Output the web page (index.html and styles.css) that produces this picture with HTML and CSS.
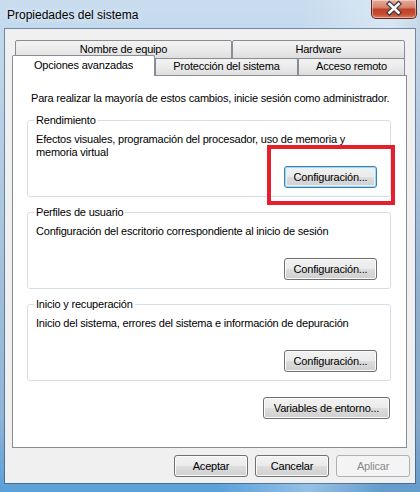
FILE: index.html
```html
<!DOCTYPE html>
<html>

<head>
  <title>Propiedades del sistema</title>
  <link rel="stylesheet" href="styles.css">
</head>

<body>
  <div class="window">
    <div class="titlebar">
      <span class="title">Propiedades del sistema</span>
      <div class="close">
        <svg width="46" height="19" viewBox="0 0 46 19">
          <path d="M18.5 5 L27.5 13.5 M27.5 5 L18.5 13.5" stroke="#3b3b3b" stroke-width="5" stroke-linecap="square" fill="none"/>
          <path d="M18.5 5 L27.5 13.5 M27.5 5 L18.5 13.5" stroke="#ffffff" stroke-width="2.6" stroke-linecap="square" fill="none"/>
        </svg>
      </div>
    </div>

    <div class="client">
      <div class="tabs-back">
        <div class="tab tab-name">Nombre de equipo</div>
        <div class="tab tab-hw">Hardware</div>
      </div>
      <div class="tabs-front">
        <div class="tab tab-selected">Opciones avanzadas</div>
        <div class="tab tab-prot">Protección del sistema</div>
        <div class="tab tab-remote">Acceso remoto</div>
      </div>

      <div class="panel">
        <div class="intro">Para realizar la mayoría de estos cambios, inicie sesión como administrador.</div>

        <fieldset class="group">
          <legend>Rendimiento</legend>
          <div class="group-body">
            <div class="group-text">Efectos visuales, programación del procesador, uso de memoria y<br>memoria virtual</div>
            <div class="group-actions">
              <button class="btn btn-default btn-config">Configuración...</button>
            </div>
          </div>
        </fieldset>

        <fieldset class="group">
          <legend>Perfiles de usuario</legend>
          <div class="group-body">
            <div class="group-text">Configuración del escritorio correspondiente al inicio de sesión</div>
            <div class="group-actions">
              <button class="btn btn-config">Configuración...</button>
            </div>
          </div>
        </fieldset>

        <fieldset class="group">
          <legend>Inicio y recuperación</legend>
          <div class="group-body">
            <div class="group-text">Inicio del sistema, errores del sistema e información de depuración</div>
            <div class="group-actions">
              <button class="btn btn-config">Configuración...</button>
            </div>
          </div>
        </fieldset>

        <div class="env-row">
          <button class="btn btn-env">Variables de entorno...</button>
        </div>
      </div>

      <div class="footer">
        <button class="btn btn-footer">Aceptar</button>
        <button class="btn btn-footer">Cancelar</button>
        <button class="btn btn-footer" disabled>Aplicar</button>
      </div>
    </div>

    <div class="highlight"></div>
  </div>
</body>

</html>
```

FILE: styles.css
```css
body {
  margin: 0;
  font-family: "Liberation Sans", Arial, sans-serif;
  font-size: 11px;
  letter-spacing: -0.2px;
  color: #000000;
}

.window {
  position: relative;
  width: 420px;
  height: 492px;
  overflow: hidden;
  background:
    linear-gradient(100deg, rgba(255, 255, 255, 0) 60%, rgba(255, 255, 255, 0.35) 78%, rgba(120, 150, 180, 0.35) 92%),
    linear-gradient(180deg, #c9ddef 0%, #c3d9ed 6%, #a7c3dd 50%, #8fb4d6 85%, #5a9fd8 100%);
}

.titlebar {
  height: 29px;
  display: flex;
  justify-content: space-between;
  align-items: flex-start;
}

.title {
  padding: 8px 0 0 7px;
  font-size: 12px;
  line-height: 15px;
  letter-spacing: 0;
  text-shadow: 0 0 6px rgba(255, 255, 255, 0.9);
}

.close {
  width: 46px;
  height: 19px;
  margin-right: 3px;
  box-sizing: border-box;
  border: 1px solid #5b2a22;
  border-top: 0;
  border-radius: 0 0 5px 5px;
  background: linear-gradient(180deg, #e9a999 0%, #d78672 40%, #c2432c 52%, #c64a32 78%, #e17d5f 100%);
  box-shadow: inset 0 0 0 1px rgba(255, 255, 255, 0.4);
}

.close svg {
  display: block;
  margin: -1px 0 0 -1px;
}

.client {
  width: 410px;
  height: 454px;
  margin-left: 5px;
  box-sizing: border-box;
  padding: 11px 5px 0 7px;
  background: #f0f0f0;
  box-shadow: 0 0 0 1px rgba(40, 70, 100, 0.55);
}

.tabs-back {
  display: flex;
  height: 19px;
  margin-left: 3px;
}

.tab {
  box-sizing: border-box;
  border: 1px solid #898c95;
  border-radius: 2px 2px 0 0;
  background: linear-gradient(180deg, #f3f3f3 0%, #ebebeb 50%, #dedede 100%);
  text-align: center;
  white-space: nowrap;
}

.tabs-back .tab {
  height: 19px;
  line-height: 17px;
}

.tab-name {
  width: 217px;
}

.tab-hw {
  width: 173px;
}

.tabs-front {
  display: flex;
  align-items: flex-end;
  height: 20px;
  margin-top: -4px;
}

.tabs-front .tab {
  height: 17px;
  line-height: 15px;
  border-bottom: 0;
}

.tab-selected {
  position: relative;
  z-index: 1;
  width: 143px;
  margin-bottom: -1px;
  background: #ffffff;
}

.tabs-front .tab-selected {
  height: 21px;
  padding-top: 2px;
  line-height: 14px;
}

.tab-prot {
  width: 143px;
}

.tab-remote {
  width: 107px;
}

.panel {
  width: 395px;
  height: 373px;
  box-sizing: border-box;
  padding: 16px 15px 0 14px;
  border: 1px solid #898c95;
  background: #ffffff;
}

.intro {
  margin-left: 4px;
  line-height: 13px;
  white-space: nowrap;
}

.group {
  margin: 9px 0 0;
  padding: 6px 13px 8px 8px;
  min-width: 0;
  border: 1px solid #d5dfe5;
  border-radius: 3px;
}

.group legend {
  padding: 0 2px;
  margin-left: -2px;
  line-height: 13px;
}

.group-body {
  display: flex;
  flex-direction: column;
  height: 55px;
}

.group-text {
  line-height: 13px;
  white-space: nowrap;
}

.group-actions {
  display: flex;
  justify-content: flex-end;
  margin-top: auto;
}

.btn {
  height: 22px;
  padding: 0;
  box-sizing: border-box;
  font-family: "Liberation Sans", Arial, sans-serif;
  font-size: 11px;
  letter-spacing: -0.2px;
  color: #000000;
  border: 1px solid #707070;
  border-radius: 3px;
  background: linear-gradient(180deg, #f2f2f2 0%, #ebebeb 48%, #dddddd 52%, #cfcfcf 100%);
  box-shadow: inset 0 0 0 1px #fbfbfb;
}

.btn-default {
  border-color: #3c7fb1;
  box-shadow: inset 0 0 0 1px #9ed8f6, inset 0 0 0 2px #e4f3fb;
}

.btn:disabled {
  color: #8a8a8a;
  border-color: #adb2b5;
  background: #f4f4f4;
  box-shadow: none;
}

.btn-config {
  width: 93px;
}

.env-row {
  display: flex;
  justify-content: flex-end;
  margin-top: 16px;
  padding-right: 1px;
}

.btn-env {
  width: 127px;
}

.footer {
  display: flex;
  justify-content: flex-end;
  gap: 7px;
  margin-top: 7px;
}

.btn-footer {
  width: 74px;
}

.highlight {
  position: absolute;
  left: 267px;
  top: 145px;
  width: 128px;
  height: 60px;
  box-sizing: border-box;
  border: 4px solid #e51f2c;
}
```
